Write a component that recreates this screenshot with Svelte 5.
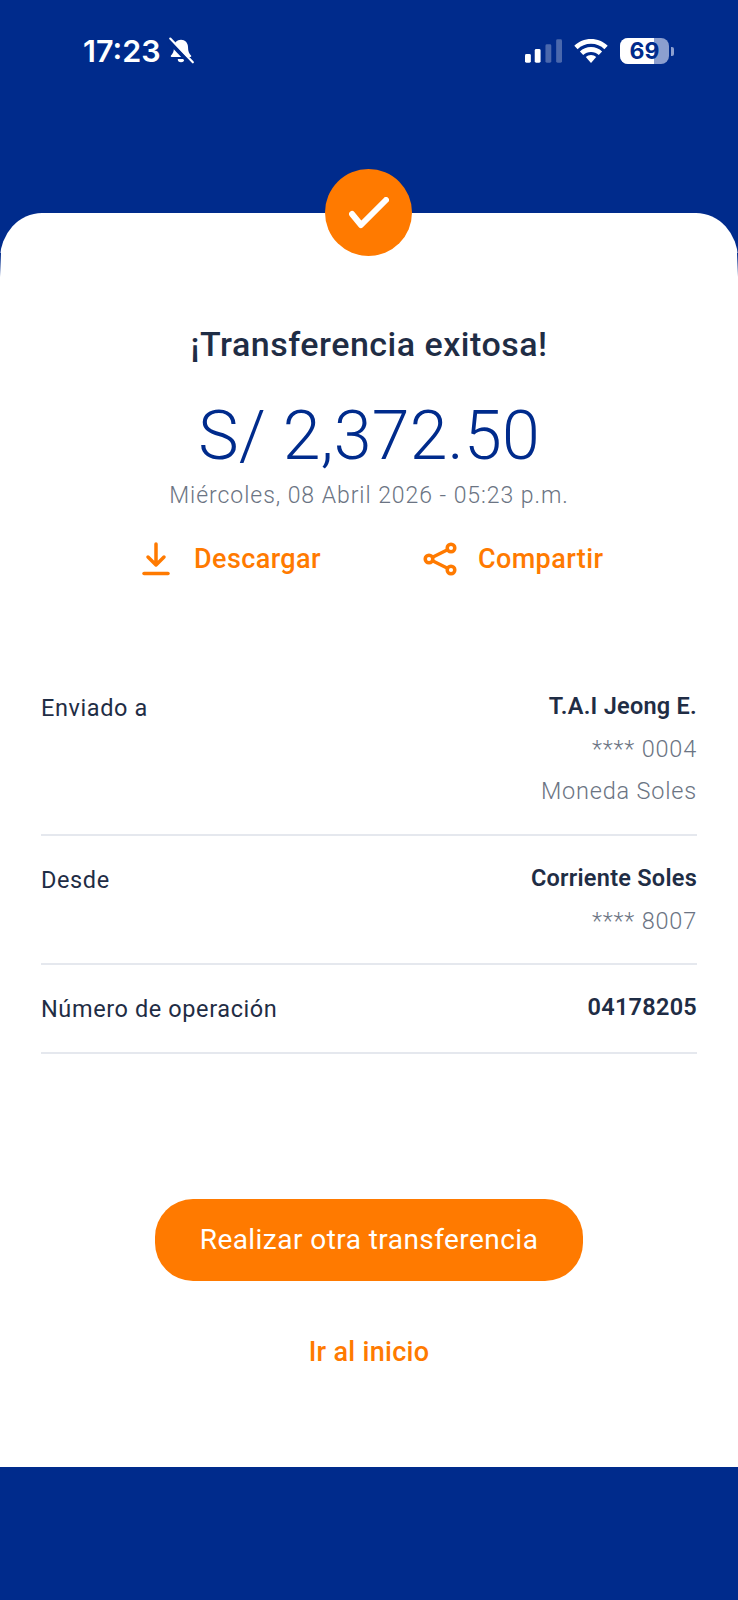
<script>
  const rows = [
    { label: 'Enviado a', lines: ['T.A.I Jeong E.', '**** 0004', 'Moneda Soles'] },
    { label: 'Desde', lines: ['Corriente Soles', '**** 8007'] },
    { label: 'Número de operación', lines: ['04178205'] }
  ];
</script>

<div class="page">
  <header class="top">
    <div class="status">
      <div class="time">
        <span>17:23</span>
        <svg width="28" height="28" viewBox="0 0 26 26" fill="none" aria-hidden="true">
          <path d="M13 2.500c-3.800 0-6.500 2.900-6.500 6.900 0 4-1.100 6.200-2.800 7.800-.5.500-.2 1.300.6 1.300h17.400c.8 0 1.100-.8.600-1.300-1.700-1.600-2.800-3.800-2.800-7.800 0-4-2.700-6.900-6.500-6.900z" fill="#fff"/>
          <path d="M10 20.500h6a3 3 0 0 1-6 0z" fill="#fff"/>
          <path d="M2 4l20 21" stroke="#002b8c" stroke-width="4"/>
          <path d="M3 1.500l21 22" stroke="#fff" stroke-width="2" stroke-linecap="round"/>
        </svg>
      </div>
      <div class="sys">
        <svg class="signal" width="38" height="24" viewBox="0 0 38 24" aria-hidden="true">
          <rect x="0" y="15" width="6" height="9" rx="1.500" fill="#fff"/>
          <rect x="10" y="10" width="6" height="14" rx="1.500" fill="#fff"/>
          <rect x="21" y="5" width="6" height="19" rx="1.500" fill="#4a68ad"/>
          <rect x="32" y="0" width="6" height="24" rx="1.500" fill="#4a68ad"/>
        </svg>
        <svg width="34" height="24" viewBox="0 0 34 24" fill="#fff" aria-hidden="true">
          <path d="M17 0c6.500 0 12.400 2.500 16.700 6.700l-3.300 3.500C26.900 6.800 22.200 4.800 17 4.800S7.100 6.800 3.600 10.200L.3 6.700C4.600 2.500 10.500 0 17 0z"/>
          <path d="M17 8c4.300 0 8.200 1.700 11.100 4.400l-3.300 3.500C22.700 14 20 12.900 17 12.900s-5.700 1.100-7.800 3l-3.300-3.500C8.800 9.700 12.700 8 17 8z"/>
          <path d="M17 16c2 0 3.800.8 5.200 2L17 24l-5.200-6c1.400-1.200 3.200-2 5.200-2z"/>
        </svg>
        <div class="battery">
          <div class="cell"><span class="fill"></span><span class="pct">69</span></div>
          <span class="nub"></span>
        </div>
      </div>
    </div>
  </header>

  <main class="card">
    <div class="badge">
      <svg width="40" height="32" viewBox="0 0 40 32" fill="none" aria-hidden="true">
        <path d="M3 17l9 11L37 3" stroke="#fff" stroke-width="6" stroke-linecap="round" stroke-linejoin="round"/>
      </svg>
    </div>

    <h1>¡Transferencia exitosa!</h1>
    <div class="amount">S/ 2,372.50</div>
    <div class="date">Miércoles, 08 Abril 2026 - 05:23 p.m.</div>

    <div class="actions">
      <div class="action dl">
        <svg width="28" height="34" viewBox="0 0 28 34" fill="none" stroke="#ff7a00" stroke-width="3.500" stroke-linecap="round" stroke-linejoin="round" aria-hidden="true">
          <path d="M14 2v21M6 15l8 8 8-8"/>
          <path d="M2 31.500h24"/>
        </svg>
        <span>Descargar</span>
      </div>
      <div class="action sh">
        <svg width="34" height="34" viewBox="0 0 34 34" fill="none" stroke="#ff7a00" stroke-width="3.500" aria-hidden="true">
          <circle cx="28" cy="6" r="3.800"/>
          <circle cx="6" cy="17" r="3.800"/>
          <circle cx="28" cy="28" r="3.800"/>
          <path d="M10 15l14-7M10 19l14 7"/>
        </svg>
        <span>Compartir</span>
      </div>
    </div>

    <section class="details">
      {#each rows as row}
        <div class="row">
          <div class="label">{row.label}</div>
          <div class="values">
            {#each row.lines as line, i}
              <div class:strong={i === 0} class:muted={i > 0}>{line}</div>
            {/each}
          </div>
        </div>
      {/each}
    </section>

    <button class="primary">Realizar otra transferencia</button>
    <button class="link">Ir al inicio</button>
  </main>

  <footer class="bottom"></footer>
</div>

<style>
  :global(body) {
    margin: 0;
    background: #fff;
  }
  .page {
    width: 738px;
    height: 1600px;
    display: flex;
    flex-direction: column;
    background: #002b8c;
    font-family: Roboto, "Liberation Sans", sans-serif;
    overflow: hidden;
  }
  .top {
    height: 213px;
    flex: none;
  }
  .status {
    display: flex;
    justify-content: space-between;
    align-items: center;
    padding: 35px 64px 0 83px;
    color: #fff;
    height: 32px;
  }
  .time {
    display: flex;
    align-items: center;
    gap: 6px;
    font: 600 30.500px/32px Inter, "Liberation Sans", sans-serif;
  }
  .sys {
    display: flex;
    align-items: center;
    gap: 12px;
  }
  .signal {
    width: 37px;
  }
  .battery {
    display: flex;
    align-items: center;
    gap: 2px;
  }
  .cell {
    position: relative;
    width: 49px;
    height: 26px;
    border-radius: 8px;
    background: #8c9fcf;
    overflow: hidden;
    display: flex;
    align-items: center;
    justify-content: center;
  }
  .fill {
    position: absolute;
    left: 0;
    top: 0;
    bottom: 0;
    width: 34px;
    background: #fff;
  }
  .pct {
    position: relative;
    color: #002b8c;
    font: 700 23px/26px Inter, "Liberation Sans", sans-serif;
  }
  .nub {
    width: 3px;
    height: 9px;
    border-radius: 0 2px 2px 0;
    background: #8c9fcf;
  }
  .card {
    position: relative;
    flex: 1;
    background: #fff;
    border-radius: 42px 42px 0 0 / 46px 46px 0 0;
    display: flex;
    flex-direction: column;
    align-items: center;
    padding-top: 113px;
    color: #1f2d45;
  }
  .card::before,
  .card::after {
    content: "";
    position: absolute;
    top: 40px;
    width: 1px;
    height: 24px;
    background: linear-gradient(#002b8c, #fff);
  }
  .card::before {
    left: 0;
  }
  .card::after {
    right: 0;
  }
  .badge {
    position: absolute;
    top: -44px;
    left: 325px;
    width: 87px;
    height: 87px;
    border-radius: 50%;
    background: #ff7a00;
    display: flex;
    align-items: center;
    justify-content: center;
  }
  h1 {
    margin: 0;
    font-size: 34px;
    line-height: 36px;
    font-weight: 500;
    color: #1f2d45;
    letter-spacing: 0.5px;
  }
  .amount {
    margin-top: 36px;
    font-size: 68px;
    line-height: 76px;
    color: #002b8c;
    font-weight: 300;
    letter-spacing: 0.2px;
  }
  .date {
    margin-top: 7px;
    font-size: 23px;
    line-height: 30px;
    color: #6b7483;
    font-weight: 300;
    letter-spacing: 0.95px;
  }
  .actions {
    width: 100%;
    margin-top: 23px;
    height: 50px;
    display: flex;
    align-items: center;
    color: #ff7a00;
    font-size: 27px;
    font-weight: 500;
    letter-spacing: 0.4px;
  }
  .action {
    display: flex;
    align-items: center;
  }
  .dl {
    margin-left: 142px;
    gap: 24px;
  }
  .sh {
    margin-left: 102px;
    gap: 21px;
  }
  .details {
    width: 656px;
    margin-top: 93px;
  }
  .row {
    display: flex;
    justify-content: space-between;
    padding: 7px 0 21.500px;
    border-bottom: 2px solid #e5e8ee;
    margin-bottom: 13px;
    font-size: 23.500px;
    letter-spacing: 0.5px;
  }
  .label {
    line-height: 42px;
    padding-top: 3px;
    letter-spacing: 0.6px;
  }
  .values {
    text-align: right;
    line-height: 42px;
  }
  .strong {
    font-weight: 600;
    letter-spacing: 0.25px;
    line-height: 44px;
  }
  .muted {
    color: #6b7483;
    font-weight: 300;
    letter-spacing: 0.8px;
  }
  button {
    border: none;
    background: none;
    font: inherit;
    padding: 0;
  }
  .primary {
    margin-top: 132px;
    width: 428px;
    height: 82px;
    border-radius: 38px;
    background: #ff7a00;
    color: #fff;
    font-size: 28px;
    font-weight: 400;
    letter-spacing: 0.45px;
  }
  .link {
    margin-top: 55px;
    color: #ff7a00;
    font-size: 27px;
    font-weight: 500;
    letter-spacing: 0.3px;
  }
  .bottom {
    height: 133px;
    flex: none;
  }
</style>
